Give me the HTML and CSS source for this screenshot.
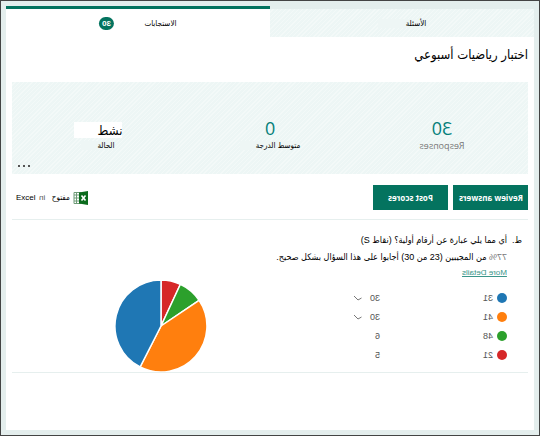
FILE: index.html
```html
<!DOCTYPE html>
<html lang="ar" dir="rtl">
<head>
    <meta charset="UTF-8">
    <meta name="viewport" content="width=device-width, initial-scale=1">
    <title>اختبار رياضيات أسبوعي</title>
    <link rel="stylesheet" href="styles.css">
</head>
<body>
<div class="frame">
    <div class="tabs">
        <button class="tab" type="button"><span class="patch">الأسئلة</span></button>
        <button class="tab selected" type="button">
            <span>الاستجابات</span>
            <span class="badge mirror">30</span>
        </button>
    </div>
    <main class="page">
        <h1>اختبار رياضيات أسبوعي</h1>
        <div class="summary">
            <div class="stat">
                <div class="value mirror">30</div>
                <div class="label latin grey mirror">Responses</div>
            </div>
            <div class="stat">
                <div class="value mirror">0</div>
                <div class="label"><span class="patch small">متوسط الدرجة</span></div>
            </div>
            <div class="stat">
                <div class="value"><span class="status">نشط</span></div>
                <div class="label"><span class="patch small">الحالة</span></div>
            </div>
            <button class="more" type="button" aria-label="المزيد">
                <svg width="12" height="3" viewBox="0 0 12 3"><path d="M0 0h2v2H0zM5 0h2v2H5zM10 0h2v2h-2z" fill="#555"/></svg>
            </button>
        </div>
        <div class="actions">
            <button class="btn" type="button"><span class="mirror">Review answers</span></button>
            <button class="btn" type="button"><span class="mirror">Post scores</span></button>
            <a class="excel" href="#">
                <svg width="16" height="14" viewBox="0 0 16 14">
                    <path d="M1 1.500h7v11H1z" fill="#fff" stroke="#6f9b78"/>
                    <path d="M1 4h6M1 7h6M1 10h6M3.500 2v10" stroke="#6f9b78"/>
                    <path d="M6 1.500L15 0v14l-9-1.500z" fill="#0b6b1d"/>
                    <path d="M8.500 4.500l4 5M12.500 4.500l-4 5" stroke="#fff" stroke-width="1.600"/>
                </svg>
                <span class="open">مفتوح</span>
                <span class="in mirror">in</span>
                <span>Excel</span>
            </a>
        </div>
        <section class="question">
            <div class="num">ط.</div>
            <div class="text">
                <h2>أي مما يلي عبارة عن أرقام أولية؟ (نقاط S)</h2>
                <p><span class="percent grey mirror">77%</span> من المجيبين (23 من 30) أجابوا على هذا السؤال بشكل صحيح.</p>
                <a class="details mirror" href="#">More Details</a>
            </div>
        </section>
        <div class="result">
            <table class="legend">
                <tr>
                    <td><i class="dot blue"></i></td>
                    <td class="answer"><span class="mirror">31</span></td>
                    <td class="count"><span class="mirror">30</span></td>
                    <td><svg width="8" height="6" viewBox="0 0 8 6"><path d="M0 1l4 4 3.500-2" fill="none" stroke="#777"/></svg></td>
                </tr>
                <tr>
                    <td><i class="dot orange"></i></td>
                    <td class="answer"><span class="mirror">41</span></td>
                    <td class="count"><span class="mirror">30</span></td>
                    <td><svg width="8" height="6" viewBox="0 0 8 6"><path d="M0 1l4 4 3.500-2" fill="none" stroke="#777"/></svg></td>
                </tr>
                <tr>
                    <td><i class="dot green"></i></td>
                    <td class="answer"><span class="mirror">48</span></td>
                    <td class="count"><span class="mirror">6</span></td>
                    <td></td>
                </tr>
                <tr>
                    <td><i class="dot red"></i></td>
                    <td class="answer"><span class="mirror">21</span></td>
                    <td class="count"><span class="mirror">5</span></td>
                    <td></td>
                </tr>
            </table>
            <div class="chart">
                <svg width="92" height="92" viewBox="0 0 92 92">
                    <g stroke="#fff" stroke-width="1.500">
                        <path d="M46 46V0A46 46 0 0 1 65.400 4.300z" fill="#d62728"/>
                        <path d="M46 46L65.400 4.300A46 46 0 0 1 84.100 20.300z" fill="#2ca02c"/>
                        <path d="M46 46L84.100 20.300A46 46 0 0 1 25.100 87z" fill="#ff7f0e"/>
                        <path d="M46 46L25.100 87A46 46 0 0 1 46 0z" fill="#1f77b4"/>
                    </g>
                </svg>
            </div>
        </div>
    </main>
</div>
</body>
</html>
```

FILE: styles.css
```css
*{
    margin:0;
    padding:0;
    box-sizing:border-box;
}
body{
    font-family:"Liberation Sans","DejaVu Sans Condensed","DejaVu Sans",sans-serif;
    font-size:8px;
    color:#000;
}
button{
    font:inherit;
    color:inherit;
    border:0;
    background:none;
}
.frame{
    min-height:100vh;
    display:flex;
    flex-direction:column;
    border:1px solid #444;
    padding:5px;
    background:#e4eeed;
}
.mirror{
    display:inline-block;
    transform:scaleX(-1);
}
.grey{
    color:#777;
}
.tabs{
    display:flex;
}
.tab{
    flex:1;
    height:31px;
    display:flex;
    align-items:center;
    justify-content:center;
    border-top:3px solid #e4eeed;
    background:repeating-linear-gradient(135deg,#edf6f5 0,#edf6f5 2px,#f3f9f8 2px,#f3f9f8 3px);
}
.tab.selected{
    gap:30px;
    border-top-color:#04735f;
    background:#fff;
}
.patch{
    padding-left:28px;
    background:#eef6f5;
}
.patch.small{
    padding-left:16px;
}
.badge{
    padding:0 3px;
    border-radius:8px;
    line-height:13px;
    background:#04735f;
    color:#fff;
    font-weight:bold;
}
.page{
    flex:1;
    padding:0 6px;
    background:#fff;
}
h1{
    padding:8px 0;
    line-height:20px;
    font-size:13px;
    font-weight:normal;
}
.summary{
    position:relative;
    display:flex;
    margin-top:9px;
    padding:36px 0 20px;
    background:repeating-linear-gradient(135deg,#edf6f5 0,#edf6f5 2px,#f3f9f8 2px,#f3f9f8 3px);
}
.stat{
    flex:1;
    text-align:center;
}
.value{
    display:block;
    line-height:20px;
    font-family:"Open Sans","DejaVu Sans Condensed",sans-serif;
    font-size:18px;
    color:#04807a;
}
.status{
    display:inline-block;
    padding-left:24px;
    line-height:16px;
    background:#fff;
    color:#000;
    font-size:13px;
}
.label{
    display:block;
    line-height:16px;
}
.latin{
    font-family:"Open Sans",sans-serif;
    font-size:9px;
}
.more{
    position:absolute;
    left:6px;
    bottom:6px;
    line-height:3px;
}
.actions{
    display:flex;
    align-items:center;
    gap:5px;
    padding:11px 0 9px;
    border-bottom:1px solid #e6efee;
}
.btn{
    width:75px;
    height:25px;
    background:#04735f;
    color:#fff;
    font-family:"Open Sans",sans-serif;
    font-weight:bold;
}
.excel{
    display:flex;
    align-items:center;
    gap:3px;
    margin-right:auto;
    padding-left:4px;
    color:#000;
    text-decoration:none;
}
.open{
    padding-left:4px;
}
.in{
    color:#555;
}
.question{
    display:flex;
    gap:5px;
    padding:12px 6px 0;
    font-size:9px;
    line-height:17px;
}
.question h2{
    font-size:9px;
    font-weight:normal;
}
.percent{
    line-height:16px;
}
.details{
    display:block;
    width:fit-content;
    line-height:14px;
    color:#3b968a;
    font-size:8px;
}
.result{
    display:flex;
    align-items:center;
    padding-right:21px;
    border-bottom:1px solid #e6efee;
}
.legend{
    border-collapse:collapse;
    color:#555;
    font-size:9px;
}
.legend td{
    height:19px;
    vertical-align:middle;
}
.dot{
    display:block;
    width:10px;
    height:10px;
    margin-left:4px;
    border-radius:50%;
}
.blue{
    background:#1f77b4;
}
.orange{
    background:#ff7f0e;
}
.green{
    background:#2ca02c;
}
.red{
    background:#d62728;
}
.answer{
    width:113px;
}
.count{
    width:18px;
}
.chart{
    flex:1;
    padding-right:147px;
    line-height:1px;
}
```
